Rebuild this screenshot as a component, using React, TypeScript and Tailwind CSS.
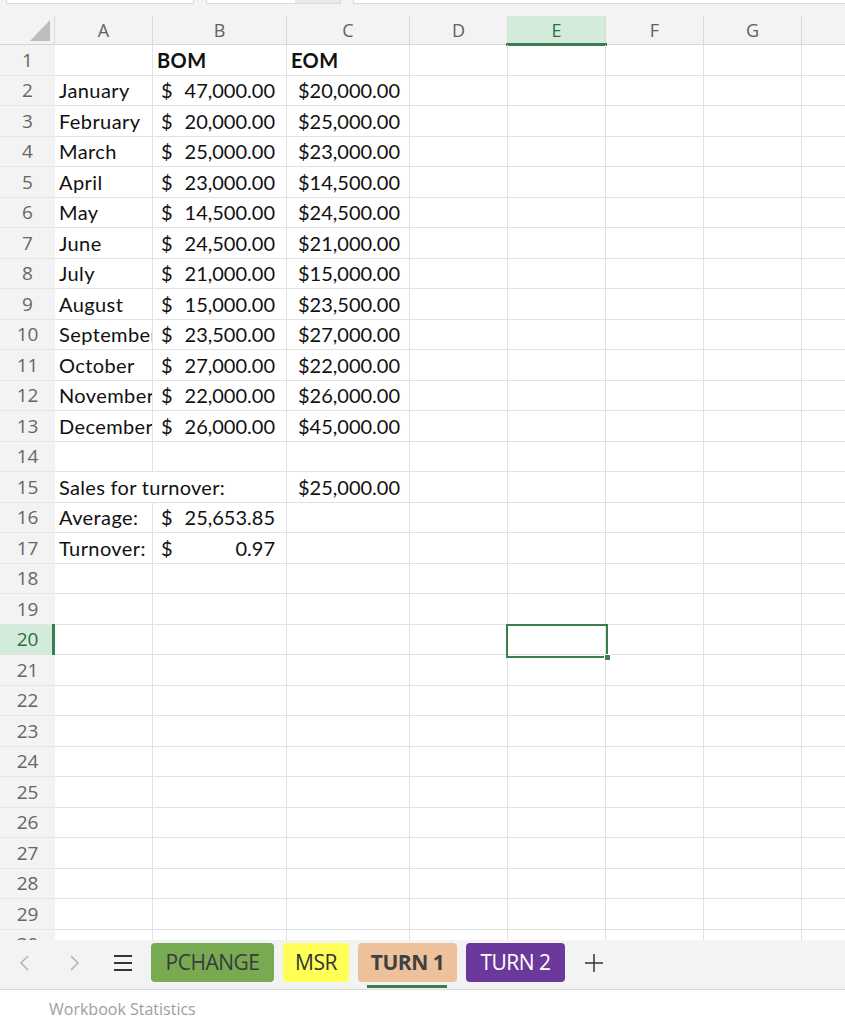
import React from "react";

type Cell = {
  text?: string;
  bold?: boolean;
  acct?: [string, string];
  right?: boolean;
  overflow?: boolean;
};

const months: [string, string, string][] = [
  ["January", "47,000.00", "$20,000.00"],
  ["February", "20,000.00", "$25,000.00"],
  ["March", "25,000.00", "$23,000.00"],
  ["April", "23,000.00", "$14,500.00"],
  ["May", "14,500.00", "$24,500.00"],
  ["June", "24,500.00", "$21,000.00"],
  ["July", "21,000.00", "$15,000.00"],
  ["August", "15,000.00", "$23,500.00"],
  ["September", "23,500.00", "$27,000.00"],
  ["October", "27,000.00", "$22,000.00"],
  ["November", "22,000.00", "$26,000.00"],
  ["December", "26,000.00", "$45,000.00"],
];

function buildRows(): Cell[][] {
  const rows: Cell[][] = [];
  rows.push([{}, { text: "BOM", bold: true }, { text: "EOM", bold: true }]);
  months.forEach(([m, b, c]) => {
    rows.push([{ text: m }, { acct: ["$", b] }, { text: c, right: true }]);
  });
  rows.push([{}, {}, {}]);
  rows.push([{ text: "Sales for turnover:", overflow: true }, {}, { text: "$25,000.00", right: true }]);
  rows.push([{ text: "Average:" }, { acct: ["$", "25,653.85"] }, {}]);
  rows.push([{ text: "Turnover:" }, { acct: ["$", "0.97"] }, {}]);
  for (let i = 18; i <= 30; i++) rows.push([{}, {}, {}]);
  return rows;
}

const colWidths = ["w-[98px]", "w-[134px]", "w-[123px]"];
const restCols = ["D", "E", "F", "G"];

const dataFont = { fontFamily: "Lato, 'Open Sans', sans-serif" };

function DataCell({ cell, width }: { cell: Cell; width: string }) {
  const base = `${width} shrink-0 h-full border-b border-[#e1e1e1] flex items-center text-[20px] text-[#111] whitespace-nowrap`;
  if (cell.overflow) {
    return (
      <div className={`${base} border-r-0 relative z-10 overflow-visible pl-[4px] tracking-[0.3px]`}>
        <span>{cell.text}</span>
      </div>
    );
  }
  if (cell.acct) {
    return (
      <div className={`${base} border-r border-r-[#e1e1e1] justify-between pl-[8px] pr-[11px] overflow-hidden`}>
        <span>{cell.acct[0]}</span>
        <span>{cell.acct[1]}</span>
      </div>
    );
  }
  return (
    <div
      className={`${base} border-r border-r-[#e1e1e1] overflow-hidden ${cell.right ? "justify-end pr-[9px]" : "pl-[4px] tracking-[0.4px]"} ${cell.bold ? "font-bold" : ""}`}
    >
      <span>{cell.text}</span>
    </div>
  );
}

export default function App() {
  const rows = buildRows();
  return (
    <div
      className="w-[845px] h-[1024px] bg-white flex flex-col overflow-hidden"
      style={{ fontFamily: "'Open Sans', sans-serif" }}
    >
      {/* top toolbar remnants */}
      <div className="h-[16px] bg-[#f3f3f3] flex items-start gap-[12px] pl-[6px] shrink-0">
        <div className="w-[188px] h-[4px] bg-white border border-t-0 border-[#d9d9d9]" />
        <div className="w-[135px] h-[4px] bg-white border border-t-0 border-[#d9d9d9] flex justify-end">
          <div className="w-[45px] h-full bg-[#e9e9e9]" />
        </div>
        <div className="flex-1 h-[4px] bg-white border border-t-0 border-r-0 border-[#d9d9d9]" />
      </div>

      {/* column headers */}
      <div className="h-[29px] bg-[#f3f3f3] flex shrink-0 border-b border-[#d6d6d6] text-[18px] text-[#616161]">
        <div className="w-[55px] shrink-0 relative border-r border-[#d9d9d9]">
          <svg className="absolute left-[30px] top-[4px]" width="20" height="21" viewBox="0 0 20 21">
            <polygon points="20,0 20,21 0,21" fill="#bdbdbd" />
          </svg>
        </div>
        {["A", "B", "C"].map((c, i) => (
          <div key={c} className={`${colWidths[i]} shrink-0 border-r border-[#d9d9d9] flex items-center justify-center`}>
            {c}
          </div>
        ))}
        {restCols.map((c) =>
          c === "E" ? (
            <div
              key={c}
              className="w-[98px] shrink-0 border-r border-[#d9d9d9] flex items-center justify-center bg-[#d3ebdb] text-[#2d6e3e] relative"
            >
              {c}
              <div className="absolute left-[-2px] right-[-2px] bottom-[-2px] h-[3px] bg-[#3b7d4f]" />
            </div>
          ) : (
            <div key={c} className="w-[98px] shrink-0 border-r border-[#d9d9d9] flex items-center justify-center">
              {c}
            </div>
          )
        )}
        <div className="flex-1" />
      </div>

      {/* grid */}
      <div className="h-[895px] shrink-0 relative overflow-hidden" style={dataFont}>
        {rows.map((r, idx) => {
          const n = idx + 1;
          const sel = n === 20;
          return (
            <div key={n} className="h-[30.5px] flex">
              <div
                className={`w-[55px] shrink-0 h-full border-b flex items-center justify-center text-[19px] relative ${
                  sel ? "bg-[#d3ebdb] text-[#2d6e3e] border-[#e1e1e1]" : "bg-[#f3f3f3] text-[#666] border-[#e6e6e6]"
                }`}
                style={{ fontFamily: "'Open Sans', sans-serif" }}
              >
                {n}
                {sel && <div className="absolute right-0 top-[-1px] bottom-[-1px] w-[3px] bg-[#3b7d4f]" />}
              </div>
              {r.map((cell, i) => (
                <DataCell key={i} cell={cell} width={colWidths[i]} />
              ))}
              {restCols.map((c) => (
                <div key={c} className="w-[98px] shrink-0 h-full border-b border-r border-[#e1e1e1]" />
              ))}
              <div className="flex-1 h-full border-b border-[#e1e1e1]" />
            </div>
          );
        })}
        {/* selected cell E20 */}
        <div className="absolute left-[506px] top-[579px] w-[102px] h-[34px] border-[2.5px] border-[#3d7e50] z-20">
          <div className="absolute right-[-5px] bottom-[-5px] w-[7px] h-[7px] bg-[#3d7e50] border border-white" />
        </div>
      </div>

      {/* sheet tabs */}
      <div className="h-[50px] shrink-0 bg-[#f3f3f3] border-b border-[#d9d9d9] flex items-start pt-[3px]">
        <div className="w-[151px] h-[39px] flex items-center shrink-0">
          <svg className="ml-[18px]" width="12" height="18" viewBox="0 0 12 18">
            <polyline points="10,2 3,9 10,16" fill="none" stroke="#b3b3b3" strokeWidth="1.5" />
          </svg>
          <svg className="ml-[39px]" width="12" height="18" viewBox="0 0 12 18">
            <polyline points="2,2 9,9 2,16" fill="none" stroke="#b3b3b3" strokeWidth="1.5" />
          </svg>
          <svg className="ml-[32px]" width="20" height="18" viewBox="0 0 20 18">
            <line x1="1" y1="2" x2="19" y2="2" stroke="#333" strokeWidth="2" />
            <line x1="1" y1="9" x2="19" y2="9" stroke="#333" strokeWidth="2" />
            <line x1="1" y1="16" x2="19" y2="16" stroke="#333" strokeWidth="2" />
          </svg>
        </div>
        <div className="flex gap-[9px] items-start">
          <div className="w-[123px] h-[39px] rounded-[4px] bg-[#78aa52] text-[#3a3a3a] text-[21px] flex items-center justify-center tracking-[-0.5px]">
            PCHANGE
          </div>
          <div className="w-[66px] h-[39px] rounded-[4px] bg-[#ffff58] text-[#333] text-[21px] flex items-center justify-center tracking-[-0.5px]">
            MSR
          </div>
          <div className="relative w-[99px] h-[39px]">
            <div className="w-full h-full rounded-[4px] bg-[#eec19d] text-[#404040] text-[21px] font-bold flex items-center justify-center tracking-[-0.5px]">
              TURN 1
            </div>
            <div className="absolute left-[9px] right-[10px] top-[42px] h-[3px] bg-[#3b7d4f]" />
          </div>
          <div className="w-[99px] h-[39px] rounded-[4px] bg-[#6b389b] text-white text-[21px] flex items-center justify-center tracking-[-0.5px]">
            TURN 2
          </div>
          <div className="h-[39px] flex items-center ml-[10px]">
            <svg width="20" height="20" viewBox="0 0 20 20">
              <line x1="10" y1="1" x2="10" y2="19" stroke="#333" strokeWidth="1.5" />
              <line x1="1" y1="10" x2="19" y2="10" stroke="#333" strokeWidth="1.5" />
            </svg>
          </div>
        </div>
      </div>

      {/* status bar */}
      <div className="flex-1 bg-white pl-[49px] pt-[7px] text-[16px] text-[#9e9e9e]">Workbook Statistics</div>
    </div>
  );
}
